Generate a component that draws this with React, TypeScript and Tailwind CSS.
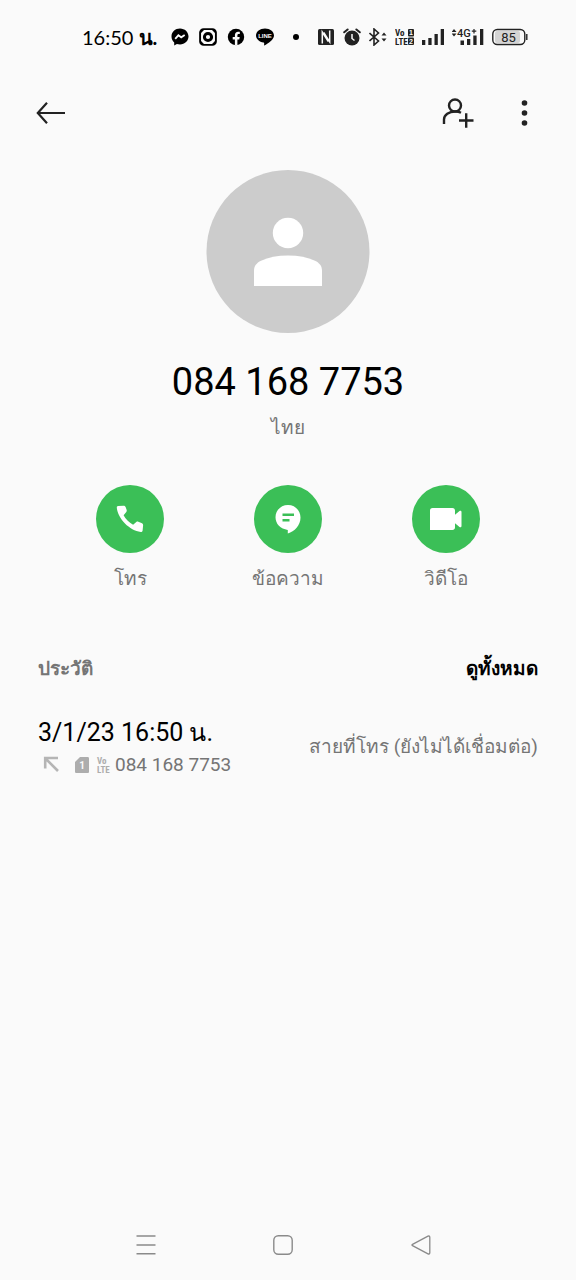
import React from 'react';

const MessengerIcon = () => (
  <svg width="18" height="18" viewBox="0 0 18 18" className="shrink-0">
    <path d="M9 .5C4.200.5.5 4 .5 8.500c0 2.400 1 4.400 2.700 5.900v3l2.700-1.400c1 .300 2 .400 3.100.400 4.800 0 8.500-3.500 8.500-7.900S13.800.5 9 .5z" fill="#000" />
    <path d="M4.200 10.800l3.200-3.500 2.800 2 3.500-2.400" fill="none" stroke="#fafafa" strokeWidth="1.800" />
  </svg>
);

const CameraIcon = () => (
  <svg width="18" height="18" viewBox="0 0 18 18" className="shrink-0">
    <rect x="1.100" y="1.100" width="15.800" height="15.800" rx="3.500" fill="none" stroke="#000" strokeWidth="1.900" />
    <path d="M2 2h3L2 5zM16 2h-3l3 3zM2 16h3l-3-3zM16 16h-3l3-3z" fill="#000" />
    <circle cx="9" cy="9" r="3.600" fill="none" stroke="#000" strokeWidth="3" />
  </svg>
);

const FacebookIcon = () => (
  <svg width="18" height="18" viewBox="0 0 18 18" className="shrink-0">
    <circle cx="9" cy="9" r="8.200" fill="#000" />
    <path d="M7.900 17.400v-6H5.700V9h2.200V7.200c0-2.200 1.300-3.400 3.200-3.400.9 0 1.700.1 1.700.1v2h-1.100c-1 0-1.300.6-1.300 1.300V9h2.300l-.4 2.400h-1.900v6z" fill="#fafafa" />
  </svg>
);

const LineIcon = () => (
  <svg width="20" height="18" viewBox="0 0 20 18" className="shrink-0">
    <path d="M10 .5C5 .5 1 3.600 1 7.600c0 3.500 3.200 6.400 7.600 7 .8.200.6.900.5 2.400 0 .5.300.6.800.3C13 15.500 19 12 19 7.600 19 3.600 15 .5 10 .5z" fill="#000" />
    <text x="10" y="10" textAnchor="middle" fontSize="6" fontWeight="700" fill="#fafafa" className="font-['Liberation_Sans',sans-serif]">LINE</text>
  </svg>
);

const NfcIcon = () => (
  <svg width="18" height="18" viewBox="0 0 18 18" className="shrink-0">
    <rect x="1" y="1" width="16" height="16" rx="1.500" fill="#222" />
    <path d="M5.300 15.500V4l6 9.500M12.700 2.500V14l-6-9.500" fill="none" stroke="#fafafa" strokeWidth="1.500" />
  </svg>
);

const AlarmIcon = () => (
  <svg width="18" height="18" viewBox="0 0 18 18" className="shrink-0">
    <circle cx="9" cy="10" r="7.500" fill="#222" />
    <path d="M1.200 4.300L4.600 1.500M16.800 4.300L13.400 1.500" stroke="#222" strokeWidth="2" strokeLinecap="round" />
    <path d="M9 6v4.500l2.500 2" fill="none" stroke="#fafafa" strokeWidth="1.500" />
  </svg>
);

const BluetoothIcon = () => (
  <svg width="18" height="18" viewBox="0 0 18 18" className="shrink-0">
    <path d="M.5 5l9 8L5 17V1l4.500 4-9 8" fill="none" stroke="#222" strokeWidth="1.600" />
    <path d="M12.500 7.500l2.500-3 2.500 3zM12.500 10.500l2.500 3 2.500-3z" fill="#222" />
  </svg>
);

const DualVolteIcon = () => (
  <svg width="19" height="18" viewBox="0 0 19 18" className="shrink-0">
    <g fill="#222" fontSize="9" fontWeight="700" className="font-['Liberation_Sans_Narrow','Roboto_Condensed','Liberation_Sans',sans-serif]">
      <text x="0" y="8">Vo</text>
      <text x="0" y="17">LTE</text>
    </g>
    <rect x="13" y="1" width="6" height="7.500" rx="1" fill="#222" />
    <rect x="13" y="9.500" width="6" height="7.500" rx="1" fill="#222" />
    <g fill="#fafafa" fontSize="7" fontWeight="700" textAnchor="middle" className="font-['Liberation_Sans',sans-serif]">
      <text x="16" y="7">1</text>
      <text x="16" y="16">2</text>
    </g>
  </svg>
);

const SignalIcon = () => (
  <svg width="22" height="18" viewBox="0 0 22 18" className="shrink-0">
    <path d="M0 12h3.300v5H0zM6.300 10h3.300v7H6.300zM12.500 6h3.300v11h-3.300zM18.700 1H22v16h-3.300z" fill="#222" />
  </svg>
);

const FourGIcon = () => (
  <svg width="32" height="18" viewBox="0 0 32 18" className="shrink-0">
    <path d="M-.5 4L2 1l2.500 3zM-.5 5.500L2 8.500l2.500-3z" fill="#222" />
    <path d="M8.500 12.500H12V17H8.500zM15 11h3.300v6H15zM21.300 7.500h3.300V17h-3.300zM28 1h3.300v16H28z" fill="#222" />
    <text x="5" y="9" fontSize="11" fontWeight="500" fill="#222" className="font-['Roboto',sans-serif]">4G</text>
    <path d="M22 1v4.500M19.800 3.200h4.500" stroke="#222" strokeWidth="1.200" />
  </svg>
);

const BatteryIcon = () => (
  <svg width="36" height="18" viewBox="0 0 36 18" className="shrink-0">
    <rect x="3" y="3" width="25" height="12" rx="2" fill="#d4d4d4" />
    <rect x=".8" y="1.500" width="32" height="15" rx="4.500" fill="none" stroke="#222" strokeWidth="1.400" />
    <path d="M34.800 6v6" stroke="#222" strokeWidth="1.400" />
    <text x="16.500" y="13.500" textAnchor="middle" fontSize="13" fill="#222" className="font-['Roboto',sans-serif]">85</text>
  </svg>
);

const PhoneIcon = () => (
  <svg width="28" height="28" viewBox="0 0 28 28">
    <path d="M2 .900L7.500.7c1 0 1.700.5 2.100 1.400l1 2.600c.3.800.2 1.500-.3 2.200L7.600 10.200c1.900 3.800 5.300 7.300 9.500 9.500l3.200-2.700c.6-.5 1.300-.6 2-.3l3.200 1.400c1.200.5 1.700 1.200 1.600 2.400l-.5 5c-.1 1-.8 1.600-1.800 1.500C13.500 25.500 1.500 13.500.8 2.500.700 1.500 1.200 1 2 .900z" fill="#fff" />
  </svg>
);

const ChatIcon = () => (
  <svg width="28" height="30" viewBox="0 0 28 30">
    <path d="M14 1C7 1 1.500 6.400 1.500 13.300c0 6.500 5 11.800 12.300 12.600v3.600C20.500 27.500 26.500 21.500 26.500 13.500 26.500 6.400 21 1 14 1z" fill="#fff" />
    <path d="M8.500 10.800h11.500M8.500 16.300h7" stroke="#3bbf57" strokeWidth="2.400" />
  </svg>
);

const VideoIcon = () => (
  <svg width="34" height="24" viewBox="0 0 34 24">
    <path d="M3.500 1h20c1.400 0 2.500 1 2.500 2.500v4.300L30.500 4c1-.6 2 0 2 1v14c0 1-1 1.600-2 1L26 16.200v4.300c0 1.500-1.100 2.500-2.500 2.500H1V3.500C1 2 2 1 3.500 1z" fill="#fff" />
  </svg>
);

const actions = [
  { label: 'โทร', icon: <PhoneIcon /> },
  { label: 'ข้อความ', icon: <ChatIcon /> },
  { label: 'วิดีโอ', icon: <VideoIcon /> },
];

const App = () => {
  return (
    <div className="min-h-screen flex flex-col bg-[#fafafa] text-black font-['Roboto',sans-serif]">
      {/* status bar */}
      <div className="flex h-[74px] items-center justify-between pl-[82px] pr-12">
        <div className="flex items-center gap-[10px]">
          <span className="mr-1 whitespace-nowrap font-['Lato',sans-serif] text-[20px] leading-6">16:50 <b>น.</b></span>
          <MessengerIcon />
          <CameraIcon />
          <FacebookIcon />
          <LineIcon />
          <span className="ml-2 size-[6px] rounded-full bg-black" />
        </div>
        <div className="flex items-center gap-2">
          <NfcIcon />
          <AlarmIcon />
          <BluetoothIcon />
          <DualVolteIcon />
          <SignalIcon />
          <FourGIcon />
          <BatteryIcon />
        </div>
      </div>

      <header className="flex h-[78px] items-center justify-between px-9">
        <button type="button" aria-label="กลับ">
          <svg width="30" height="24" viewBox="0 0 30 24" fill="none" stroke="#222" strokeWidth="2.200">
            <path d="M29 12H2M11 1.800L1.800 12l9.200 10.200" />
          </svg>
        </button>
        <div className="flex items-center gap-8">
          <button type="button" aria-label="เพิ่มรายชื่อ">
            <svg width="34" height="32" viewBox="0 0 34 32" fill="none" stroke="#222" strokeWidth="2.400">
              <circle cx="13" cy="8.500" r="6" />
              <path d="M2 27v-4.500C2 18 7 14.500 13 14.500c2.300 0 4.300.3 6 1.200M17 23.500h14.500M24.200 16.200v14.600" />
            </svg>
          </button>
          <button type="button" aria-label="เมนู" className="flex w-8 justify-center">
            <svg width="8" height="28" viewBox="0 0 8 28" fill="#222">
              <circle cx="4.500" cy="4" r="2.800" />
              <circle cx="4.500" cy="14" r="2.800" />
              <circle cx="4.500" cy="24" r="2.800" />
            </svg>
          </button>
        </div>
      </header>

      <main className="flex flex-col pt-[18px]">
        <div className="flex flex-col items-center">
          <svg width="164" height="164" viewBox="0 0 164 164">
            <circle cx="82" cy="81.500" r="81.500" fill="#ccc" />
            <circle cx="82" cy="63" r="15.200" fill="#fff" />
            <path d="M48 116v-15c0-5 2.500-8 7-10.200C62.500 87.300 71.500 85.500 82 85.500s19.500 1.800 27 5.300c4.500 2.200 7 5.200 7 10.200v15z" fill="#fff" />
          </svg>
          <h1 className="mt-6 text-[38px] leading-[48px]">084 168 7753</h1>
          <p className="mt-2 text-[19px] leading-7 text-[#757575]">ไทย</p>
        </div>

        {/* contact actions */}
        <div className="mt-[43px] grid grid-cols-3 px-[51px]">
          {actions.map((action) => (
            <button key={action.label} type="button" className="flex flex-col items-center gap-3">
              <span className="flex size-[68px] items-center justify-center rounded-full bg-[#3bbf57]">{action.icon}</span>
              <span className="text-[19px] leading-7 text-[#757575]">{action.label}</span>
            </button>
          ))}
        </div>

        {/* call history */}
        <section className="mt-[62px] px-[38px]">
          <div className="flex items-center justify-between">
            <h2 className="text-[19px] font-bold leading-7 text-[#757575]">ประวัติ</h2>
            <a href="#history" className="text-[19px] font-bold leading-7">ดูทั้งหมด</a>
          </div>
          <div className="mt-8 flex items-center justify-between">
            <div>
              <p className="text-[25px] leading-9">3/1/23 16:50 น.</p>
              <div className="flex items-center text-[19px] leading-7 text-[#757575]">
                <svg width="24" height="20" viewBox="0 0 24 20" fill="none" stroke="#b5b5b5" strokeWidth="2.600">
                  <path d="M7.200 13.500V3H20M8 4l12 12" />
                </svg>
                <svg width="16" height="18" viewBox="0 0 16 18" className="ml-3">
                  <path d="M6 1h7.500C14.500 1 15 1.500 15 2.500v13c0 1-.5 1.500-1.500 1.500h-11C1.500 17 1 16.500 1 15.500V6z" fill="#adadad" />
                  <text x="8" y="13" textAnchor="middle" fontSize="10" fontWeight="700" fill="#fafafa">1</text>
                </svg>
                <svg width="16" height="18" viewBox="0 0 16 18" className="ml-1.5 mr-[3px]">
                  <g fill="#adadad" fontSize="9" fontWeight="700" className="font-['Liberation_Sans_Narrow','Roboto_Condensed','Liberation_Sans',sans-serif]">
                    <text x="1" y="8">Vo</text>
                    <text x="1" y="17">LTE</text>
                  </g>
                </svg>
                <span>084 168 7753</span>
              </div>
            </div>
            <p className="text-[19px] leading-7 text-[#757575]">สายที่โทร (ยังไม่ได้เชื่อมต่อ)</p>
          </div>
        </section>
      </main>

      {/* system navigation */}
      <nav className="mt-auto grid h-[70px] grid-cols-3 items-center justify-items-center pl-[77px] pr-[86px]">
        <button type="button" aria-label="แอปล่าสุด">
          <svg width="20" height="20" viewBox="0 0 20 20" stroke="#8a8a8a" strokeWidth="1.500">
            <path d="M.5 1h19M.5 10h19M.5 18.800h19" />
          </svg>
        </button>
        <button type="button" aria-label="หน้าหลัก">
          <svg width="20" height="20" viewBox="0 0 20 20" fill="none" stroke="#8a8a8a" strokeWidth="1.400">
            <rect x=".8" y=".8" width="18.400" height="18.400" rx="4.500" />
          </svg>
        </button>
        <button type="button" aria-label="ย้อนกลับ">
          <svg width="20" height="20" viewBox="0 0 20 20" fill="none" stroke="#8a8a8a" strokeWidth="1.300" strokeLinejoin="round">
            <path d="M1.500 9.300L17 1.200c1-.5 1.800 0 1.800 1v15.600c0 1-.8 1.500-1.800 1L1.500 10.700c-.7-.4-.7-1 0-1.400z" />
          </svg>
        </button>
      </nav>
    </div>
  );
};

export default App;
